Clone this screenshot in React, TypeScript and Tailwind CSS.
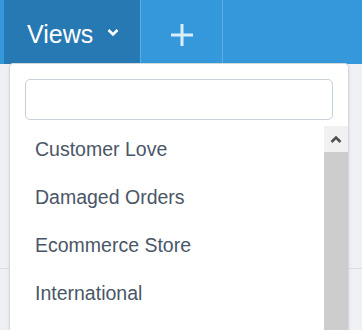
const views = ['Customer Love', 'Damaged Orders', 'Ecommerce Store', 'International'];

export default function App() {
    return (
        <div className="relative w-[362px] h-[330px] overflow-hidden bg-[#eef0f3] font-['Liberation_Sans',Arial,sans-serif]">
            {/* top bar */}
            <div className="flex h-[64px] bg-[#3498db]">
                <div className="w-[4px]" />
                <div className="flex w-[136px] items-center bg-[#2779b3] pl-[23px] pt-[5px]">
                    <span className="text-[25px] leading-none text-white">Views</span>
                    <svg width="12" height="10" viewBox="0 0 12 10" className="ml-[14px] mb-[6px]">
                        <polyline points="1.5,3 6,7.5 10.5,3" fill="none" stroke="#fff" strokeWidth="2.5" />
                    </svg>
                </div>
                <div className="w-px bg-[#5aafe6]" />
                <div className="flex w-[81px] items-center justify-center pt-[5px]">
                    <svg width="22" height="22" viewBox="0 0 22 22">
                        <path d="M11 0v22M0 11h22" stroke="#d9eefb" strokeWidth="3" />
                    </svg>
                </div>
                <div className="w-px bg-[#5aafe6]" />
            </div>

            <div className="mt-[204px] h-px bg-[#d9dee3]" />

            {/* views dropdown */}
            <div className="absolute left-[9px] top-[63px] bottom-[-4px] w-[340px] rounded-[4px] border border-[#d3d8dd] bg-white shadow-[0_1px_3px_rgba(0,0,0,0.08)]">
                <div className="px-[15px] pt-[15px] pb-[6px]">
                    <input
                        type="text"
                        className="block h-[41px] w-full rounded-[5px] border border-[#c8d0d8] bg-white outline-none"
                    />
                </div>
                <div className="flex">
                    <ul className="flex-1">
                        {views.map(v => (
                            <li key={v} className="flex h-[48px] items-center pl-[25px] text-[19.5px] text-[#4a5667]">
                                {v}
                            </li>
                        ))}
                    </ul>
                    <div className="flex w-[24px] flex-col">
                        <div className="flex h-[26px] items-center justify-center bg-[#f1f1f1]">
                            <svg width="12" height="8" viewBox="0 0 12 8">
                                <polyline points="1.5,7 6,2.5 10.5,7" fill="none" stroke="#505050" strokeWidth="2.6" />
                            </svg>
                        </div>
                        <div className="h-[200px] bg-[#cdcdcd]" />
                    </div>
                </div>
            </div>
        </div>
    );
}
